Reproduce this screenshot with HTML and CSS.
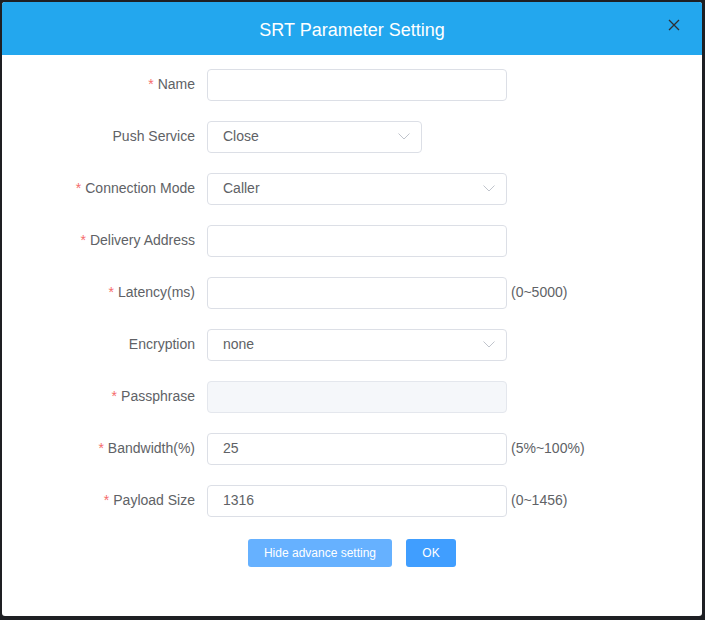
FILE: index.html
```html
<!DOCTYPE html>
<html lang="en">

<head>
    <meta charset="UTF-8">
    <meta name="viewport" content="width=device-width, initial-scale=1.0">
    <title>SRT Parameter Setting</title>

    <link rel="stylesheet" href="styles.css">
</head>

<body>
<div class="dialog">
    <div class="dialog-header">
        <span class="dialog-title">SRT Parameter Setting</span>
        <button class="dialog-close" aria-label="Close">
            <svg width="12" height="12" viewBox="0 0 12 12">
                <path d="M1 1 L11 11 M11 1 L1 11" stroke="#2d2f33" stroke-width="1.3" fill="none"/>
            </svg>
        </button>
    </div>

    <div class="dialog-body">
        <div class="form-row">
            <label class="form-label required">Name</label>
            <div class="form-field">
                <div class="input"></div>
            </div>
        </div>
        <div class="form-row">
            <label class="form-label">Push Service</label>
            <div class="form-field">
                <div class="input select small">
                    <span>Close</span>
                    <svg class="arrow" width="12" height="7" viewBox="0 0 12 7"><path d="M0.5 0.5 L6 6 L11.5 0.5" stroke="#c0c4cc" fill="none"/></svg>
                </div>
            </div>
        </div>
        <div class="form-row">
            <label class="form-label required">Connection Mode</label>
            <div class="form-field">
                <div class="input select">
                    <span>Caller</span>
                    <svg class="arrow" width="12" height="7" viewBox="0 0 12 7"><path d="M0.5 0.5 L6 6 L11.5 0.5" stroke="#c0c4cc" fill="none"/></svg>
                </div>
            </div>
        </div>
        <div class="form-row">
            <label class="form-label required">Delivery Address</label>
            <div class="form-field">
                <div class="input"></div>
            </div>
        </div>
        <div class="form-row">
            <label class="form-label required">Latency(ms)</label>
            <div class="form-field">
                <div class="input"></div>
                <span class="hint">(0~5000)</span>
            </div>
        </div>
        <div class="form-row">
            <label class="form-label">Encryption</label>
            <div class="form-field">
                <div class="input select">
                    <span>none</span>
                    <svg class="arrow" width="12" height="7" viewBox="0 0 12 7"><path d="M0.5 0.5 L6 6 L11.5 0.5" stroke="#c0c4cc" fill="none"/></svg>
                </div>
            </div>
        </div>
        <div class="form-row">
            <label class="form-label required">Passphrase</label>
            <div class="form-field">
                <div class="input disabled"></div>
            </div>
        </div>
        <div class="form-row">
            <label class="form-label required">Bandwidth(%)</label>
            <div class="form-field">
                <div class="input"><span>25</span></div>
                <span class="hint">(5%~100%)</span>
            </div>
        </div>
        <div class="form-row">
            <label class="form-label required">Payload Size</label>
            <div class="form-field">
                <div class="input"><span>1316</span></div>
                <span class="hint">(0~1456)</span>
            </div>
        </div>

        <div class="form-buttons">
            <button class="btn btn-light">Hide advance setting</button>
            <button class="btn btn-primary">OK</button>
        </div>
    </div>
</div>
</body>

</html>
```

FILE: styles.css
```css
html, body {
    margin: 0;
    padding: 0;
}

body {
    width: 705px;
    height: 620px;
    background-color: #1e1f23;
    font-family: "Liberation Sans", Arial, sans-serif;
    overflow: hidden;
}

.dialog {
    margin: 2px 0 0 2px;
    width: 700px;
    height: 614px;
    background-color: #fff;
    border-radius: 3px;
    overflow: hidden;
}

.dialog-header {
    position: relative;
    display: flex;
    align-items: center;
    justify-content: center;
    box-sizing: border-box;
    height: 53px;
    padding-top: 4px;
    background-color: #23a7ee;
}

.dialog-title {
    color: #fff;
    font-size: 18px;
}

.dialog-close {
    position: absolute;
    top: 17px;
    right: 22px;
    padding: 0;
    border: none;
    background: none;
    line-height: 0;
}

.dialog-body {
    padding-top: 14px;
}

.form-row {
    display: flex;
    align-items: center;
    height: 32px;
    margin-bottom: 20px;
}

.form-label {
    width: 193px;
    padding-right: 12px;
    padding-bottom: 2px;
    text-align: right;
    color: #606266;
    font-size: 14px;
}

.form-label.required::before {
    content: "*";
    margin-right: 4px;
    color: #f56c6c;
}

.form-field {
    display: flex;
    align-items: center;
}

.input {
    display: flex;
    align-items: center;
    justify-content: space-between;
    box-sizing: border-box;
    width: 300px;
    height: 32px;
    padding: 0 11px 2px 15px;
    border: 1px solid #dcdfe6;
    border-radius: 4px;
    color: #606266;
    font-size: 14px;
}

.input.small {
    width: 215px;
}

.input.disabled {
    background-color: #f5f7fa;
    border-color: #e4e7ed;
}

.hint {
    margin-left: 4px;
    padding-bottom: 2px;
    color: #606266;
    font-size: 14px;
}

.form-buttons {
    display: flex;
    justify-content: center;
    gap: 14px;
    padding-top: 2px;
}

.btn {
    height: 28px;
    padding: 0 16px;
    border: none;
    border-radius: 3px;
    color: #fff;
    font-family: "Liberation Sans", Arial, sans-serif;
    font-size: 12px;
}

.btn-light {
    background-color: #66b1ff;
}

.btn-primary {
    width: 50px;
    padding: 0;
    background-color: #409eff;
}
```
